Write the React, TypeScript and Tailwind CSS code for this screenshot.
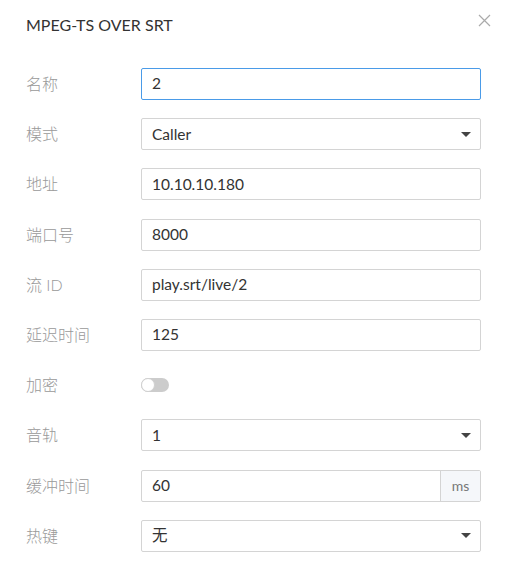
import React from "react";

const font = { fontFamily: "Lato, 'Noto Sans CJK SC', sans-serif" };

function Caret() {
  return (
    <svg width="10" height="5" viewBox="0 0 10 5" className="shrink-0">
      <path d="M0 0 L10 0 L5 5 Z" fill="#444" />
    </svg>
  );
}

function Row({ label, children }: { label: string; children: React.ReactNode }) {
  return (
    <div className="flex h-8 items-center">
      <div className="w-[115px] shrink-0 text-[16px] font-light text-[#999]">{label}</div>
      <div className="flex h-8 flex-1 items-center">{children}</div>
    </div>
  );
}

function TextBox({ value, focused }: { value: string; focused?: boolean }) {
  return (
    <div
      className={`flex h-8 w-full items-center rounded-[2px] border px-[10px] text-[15.5px] text-[#333] ${
        focused ? "border-[#4a9be8]" : "border-[#d4d4d4]"
      }`}
    >
      {value}
    </div>
  );
}

function SelectBox({ value }: { value: string }) {
  return (
    <div className="flex h-8 w-full items-center justify-between rounded-[2px] border border-[#d4d4d4] pl-[10px] pr-[9px] text-[15.5px] text-[#333]">
      <span>{value}</span>
      <Caret />
    </div>
  );
}

export default function App() {
  return (
    <div className="h-[579px] w-[513px] bg-white" style={font}>
      {/* Header */}
      <div className="flex items-start justify-between pl-[26px] pr-[22px] pt-[15px]">
        <h2 className="text-[16px] leading-5 text-[#333]">MPEG-TS OVER SRT</h2>
        <svg width="13" height="13" viewBox="0 0 13 13" className="mt-[-1px]">
          <path d="M1 1 L12 12 M12 1 L1 12" stroke="#aaa" strokeWidth="1.2" />
        </svg>
      </div>

      {/* Form */}
      <div className="mt-[33px] flex flex-col gap-[18.2px] pl-[26px] pr-8">
        <Row label="名称">
          <TextBox value="2" focused />
        </Row>
        <Row label="模式">
          <SelectBox value="Caller" />
        </Row>
        <Row label="地址">
          <TextBox value="10.10.10.180" />
        </Row>
        <Row label="端口号">
          <TextBox value="8000" />
        </Row>
        <Row label="流 ID">
          <TextBox value="play.srt/live/2" />
        </Row>
        <Row label="延迟时间">
          <TextBox value="125" />
        </Row>
        <Row label="加密">
          <div className="relative h-[14px] w-[28px] rounded-full bg-[#cccccc]">
            <div className="absolute left-0 top-0 h-[14px] w-[14px] rounded-full border border-[#d0d0d0] bg-white" />
          </div>
        </Row>
        <Row label="音轨">
          <SelectBox value="1" />
        </Row>
        <Row label="缓冲时间">
          <div className="flex h-8 w-full rounded-[2px] border border-[#d4d4d4] text-[15.5px] text-[#333]">
            <div className="flex flex-1 items-center px-[10px]">60</div>
            <div className="flex w-[40px] items-center justify-center border-l border-[#d4d4d4] bg-[#f5f7fa] text-[14px] text-[#777]">
              ms
            </div>
          </div>
        </Row>
        <Row label="热键">
          <SelectBox value="无" />
        </Row>
      </div>
    </div>
  );
}
